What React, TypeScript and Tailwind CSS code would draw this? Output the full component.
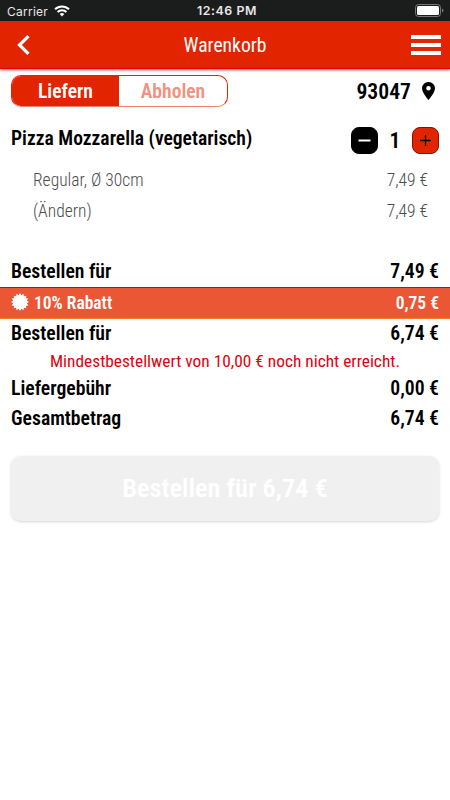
import type { ReactNode } from "react";
import { clsx } from "clsx";

interface SummaryRowProps {
  label: string;
  value: string;
  className?: string;
}

function SummaryRow({ label, value, className }: SummaryRowProps) {
  return (
    <div
      className={clsx(
        "flex items-center justify-between px-[11px] pt-px text-[19.7px] font-semibold",
        className,
      )}
    >
      <span>{label}</span>
      <span>{value}</span>
    </div>
  );
}

function OptionRow({ label, value }: SummaryRowProps) {
  return (
    <div className="flex h-[31px] items-center justify-between pt-px pr-[22px] pl-[33px] text-[17.5px] font-light text-[#4c4c4c]">
      <span>{label}</span>
      <span>{value}</span>
    </div>
  );
}

function StatusBar() {
  return (
    <div className="flex h-[21px] items-center justify-between bg-[#1b1d1c] pr-[6px] pl-[7px] font-['Inter',sans-serif] text-[12px] text-[#e8e8e8] [font-stretch:100%]">
      <div className="flex w-[190px] items-center gap-[6px] tracking-[0.25px]">
        <span className="pt-[2px]">Carrier</span>
        <svg width="16" height="12" viewBox="0 0 16 12" fill="none" stroke="#fff" strokeWidth="2">
          <path d="M1 4.3a10 10 0 0 1 14 0" />
          <path d="M3.6 7a6.3 6.3 0 0 1 8.8 0" />
          <path d="M8 11.4 5.7 9a3.3 3.3 0 0 1 4.6 0z" fill="#fff" stroke="none" />
        </svg>
      </div>
      <span className="flex-1 pt-[2px] text-[12.4px] font-semibold tracking-[0.55px]">12:46 PM</span>
      <svg width="29" height="13" viewBox="0 0 29 13">
        <rect x="0.5" y="0.5" width="25" height="12" rx="3" fill="none" stroke="#777" />
        <rect x="2" y="2" width="22" height="9" rx="1.5" fill="#fff" />
        <path d="M27 4.5c2 .7 2 3.3 0 4z" fill="#777" />
      </svg>
    </div>
  );
}

function Header() {
  return (
    <header className="flex h-[48px] items-center justify-between border-b border-[#ee0000] bg-[#e22400] pr-[9px] pl-[17px] text-white shadow-[0_1px_3px_rgba(0,0,0,0.6)]">
      <button type="button" aria-label="Zurück" className="w-[22px]">
        <svg width="13" height="20" viewBox="0 0 13 20" fill="none" stroke="#fff" strokeWidth="3.2">
          <path d="M11.5 1.2 2.5 10l9 8.8" />
        </svg>
      </button>
      <h1 className="pt-[2px] text-[19.6px]">Warenkorb</h1>
      <button type="button" aria-label="Menü" className="flex w-[30px] flex-col gap-[4px]">
        <span className="h-[4px] bg-white" />
        <span className="h-[4px] bg-white" />
        <span className="h-[4px] bg-white" />
      </button>
    </header>
  );
}

function StepButton({ children, label, className }: { children: ReactNode; label: string; className: string }) {
  return (
    <button
      type="button"
      aria-label={label}
      className={clsx("flex size-[27px] items-center justify-center rounded-[8px] border", className)}
    >
      {children}
    </button>
  );
}

function SealIcon() {
  const points = Array.from({ length: 32 }, (_, i) => {
    const r = i % 2 ? 7 : 9;
    const a = (i * Math.PI) / 16;
    return `${(9 + r * Math.sin(a)).toFixed(2)},${(9 - r * Math.cos(a)).toFixed(2)}`;
  }).join(" ");
  return (
    <svg className="-mt-[3px]" width="18" height="18" viewBox="0 0 18 18" fill="#fff">
      <polygon points={points} />
    </svg>
  );
}

export default function App() {
  return (
    <div className="min-h-[800px] w-[450px] bg-white font-['Roboto_Condensed','Roboto',sans-serif] leading-none text-black antialiased [font-stretch:75%]">
      <StatusBar />
      <Header />

      <div className="mt-[6px] flex h-[32px] items-center justify-between pr-[15px] pl-[11px]">
        <div className="flex h-[32px] w-[217px] overflow-hidden rounded-[10px] border border-[#e22400] border-b-[#f08070] text-[19.6px] font-semibold">
          <button type="button" className="w-[107px] bg-[#e22400] pt-[2px] text-white">
            Liefern
          </button>
          <button type="button" className="flex-1 pt-[2px] text-[#f3917f]">
            Abholen
          </button>
        </div>
        <div className="flex items-center gap-[11px] text-[21.7px] font-semibold">
          <span className="pt-[2px]">93047</span>
          <svg width="13" height="18" viewBox="0 0 13 18">
            <path
              d="M6.5 0A6.4 6.4 0 0 0 0 6.3C0 11 6.5 18 6.5 18S13 11 13 6.3A6.4 6.4 0 0 0 6.5 0zm0 8.6a2.3 2.3 0 1 1 0-4.6 2.3 2.3 0 0 1 0 4.6z"
              fill="#000"
            />
          </svg>
        </div>
      </div>

      <div className="mt-[20px] flex h-[27px] items-center justify-between px-[11px]">
        <span className="pb-[3px] text-[19.6px] font-semibold">Pizza Mozzarella (vegetarisch)</span>
        <div className="flex items-center">
          <StepButton label="Weniger" className="border-black bg-black">
            <svg width="13" height="13" viewBox="0 0 13 13" stroke="#fff" strokeWidth="2">
              <path d="M0.5 6.5h12" />
            </svg>
          </StepButton>
          <span className="w-[34px] text-center text-[21.6px] font-semibold">1</span>
          <StepButton label="Mehr" className="border-[#8a1000] bg-[#e22400]">
            <svg width="13" height="13" viewBox="0 0 13 13" stroke="#000" strokeWidth="1.3">
              <path d="M1 6.5h11M6.5 1v11" />
            </svg>
          </StepButton>
        </div>
      </div>

      <div className="mt-[11px]">
        <OptionRow label="Regular, Ø 30cm" value="7,49 €" />
        <OptionRow label="(Ändern)" value="7,49 €" />
      </div>

      <SummaryRow className="mt-[29px] h-[31px]" label="Bestellen für" value="7,49 €" />
      <div className="flex h-[32px] items-center justify-between border-t border-b border-t-[#e40000] border-b-[#f08030] bg-[#eb5635] px-[11px] pt-px text-[17.5px] font-semibold text-white">
        <span className="flex items-center gap-[5px]">
          <SealIcon />
          10% Rabatt
        </span>
        <span>0,75 €</span>
      </div>
      <SummaryRow className="h-[29px]" label="Bestellen für" value="6,74 €" />
      <p className="flex h-[26px] items-center justify-center pt-[2px] text-[17.35px] font-normal text-[#e2000b]">
        Mindestbestellwert von 10,00 € noch nicht erreicht.
      </p>
      <SummaryRow className="h-[29px]" label="Liefergebühr" value="0,00 €" />
      <SummaryRow className="h-[30px]" label="Gesamtbetrag" value="6,74 €" />

      <div className="mt-[23px] px-[11px]">
        <button
          type="button"
          disabled
          className="h-[65px] w-full rounded-[10px] bg-[#f0f0f0] text-[26.3px] font-semibold text-white shadow-[0_1px_3px_rgba(0,0,0,0.16)]"
        >
          Bestellen für 6,74 €
        </button>
      </div>
    </div>
  );
}
